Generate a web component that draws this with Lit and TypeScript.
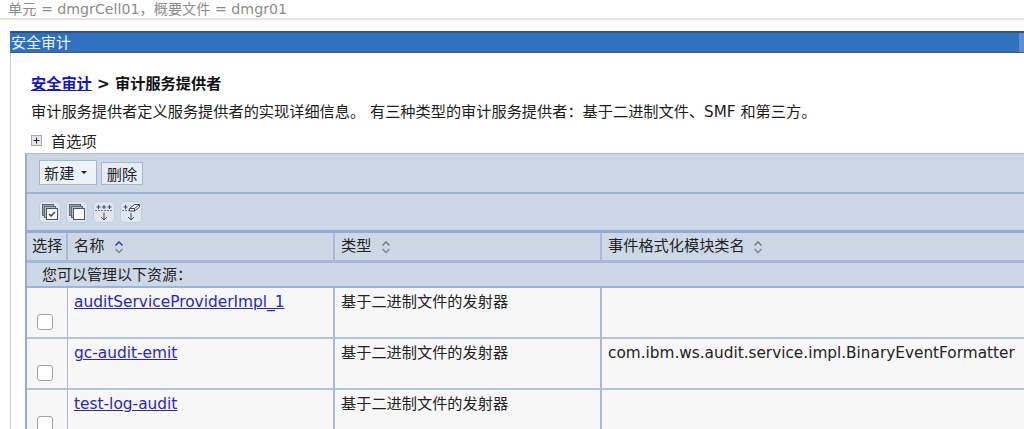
import { LitElement, html, css, svg } from "lit";
import { customElement } from "lit/decorators.js";

const sortIcon = (active: boolean) => svg`<svg class="sort" width="10" height="14" viewBox="0 0 10 14" fill="none" stroke-width="1.4">
  <path d="M1.5 5.5 L5 2 L8.5 5.5" stroke=${active ? "#1f3f9a" : "#6d7480"}/>
  <path d="M1.5 9 L5 12.5 L8.5 9" stroke="#7d8490"/></svg>`;

const rows = [
  { name: "auditServiceProviderImpl_1", type: "基于二进制文件的发射器", cls: "" },
  { name: "gc-audit-emit", type: "基于二进制文件的发射器", cls: "com.ibm.ws.audit.service.impl.BinaryEventFormatter" },
  { name: "test-log-audit", type: "基于二进制文件的发射器", cls: "" },
];

@customElement("app-root")
export class AppRoot extends LitElement {
  static styles = css`
    :host {
      display: block; width: 1024px; height: 429px; overflow: hidden; background: #fff;
      font-family: "DejaVu Sans", "Noto Sans CJK SC", sans-serif; font-size: 15.2px; color: #222;
    }
    .context {
      height: 18px; line-height: 18px; padding-left: 8px; color: #8c8c8c; font-size: 14.2px;
      border-bottom: 2px solid #e4e4e4; white-space: nowrap;
    }
    .panel { margin: 11px 0 0 10px; border-left: 1px solid #d2d2d2; height: 398px; }
    .title {
      height: 19px; line-height: 20px; background: #3071bf; color: #eef4fb; font-size: 15px;
      border-top: 2px solid #35507c; border-bottom: 1px solid #4a5a78; padding-left: 1px; margin-left: -1px;
      display: flex; justify-content: space-between;
    }
    .title i { display: block; width: 5px; background: #5f90cc; }
    .content { padding: 20px 0 0 14px; width: 1100px; }
    .crumb { padding-left: 6px; font-size: 15.2px; font-weight: 700; height: 22px; line-height: 22px; color: #111; }
    .crumb a { color: #1414c8; }
    .desc { padding-left: 6px; height: 24px; line-height: 24px; margin-top: 5px; white-space: nowrap; color: #1c1c1c; }
    .pref { display: flex; align-items: center; gap: 9px; height: 24px; margin-top: 4px; padding-left: 6px; }
    .plus { display: block; }
    .table { margin-top: 1px; border-left: 2px solid #98acd0; border-top: 1px solid #a9bad6; }
    .bar { background: #cdd8e7; display: flex; align-items: center; }
    .bar1 { height: 38px; gap: 4px; padding-left: 12px; border-bottom: 2px solid #9db3d8; }
    .bar2 { height: 36px; gap: 5px; padding-left: 12px; border-bottom: 3px solid #94aad2; }
    .btn {
      box-sizing: border-box; background: #e6edf6; border: 1px solid #a5b6cf; color: #222;
      height: 24px; display: flex; align-items: center; justify-content: center; padding: 0 3px; font-family: inherit;
    }
    .btn.new { height: 25px; width: 58px; gap: 7px; background: #edf2f9; margin-top: -2px; justify-content: flex-start; padding-left: 4px; }
    .btn.del { width: 42px; height: 23px; }
    .caret { width: 0; height: 0; border-left: 3px solid transparent; border-right: 3px solid transparent; border-top: 3px solid #222; }
    .tool {
      box-sizing: border-box; width: 22px; height: 22px; border-radius: 4px; background: #dfe6f0;
      border: 1px solid #c2cedf; display: flex; align-items: center; justify-content: center;
    }
    .grid { display: grid; grid-template-columns: 41px 267px 267px 1fr; }
    .head {
      background: #cdd8e7; height: 27px; line-height: 27px; padding-left: 6px; white-space: nowrap;
      border-right: 2px solid #a9bad6; border-bottom: 3px solid #a3b6d9; display: flex; align-items: center; gap: 8px;
    }
    .head:first-child { padding-left: 5px; }
    .head.wide { gap: 10px; }
    .group {
      grid-column: 1 / -1; background: #cdd8e7; height: 23px; line-height: 25px; padding-left: 15px; font-size: 15px;
      border-bottom: 2px solid #9db3d8;
    }
    .cell {
      box-sizing: border-box; height: 51px; background: #f7f7f8; border-right: 2px solid #a9bad6;
      border-bottom: 2px solid #b3c3df; padding: 3px 0 0 6px; line-height: 22px; white-space: nowrap;
    }
    .cell.check { padding: 26px 0 0 10px; border-right-width: 1px; }
    .cell.cls { font-size: 15.3px; }
    .cell a { color: #2828b8; font-size: 15.4px; }
    .box { display: block; box-sizing: border-box; width: 16px; height: 16px; background: #fff; border: 1px solid #a0a0a0; border-radius: 3px; }
  `;

  render() {
    return html`
      <div class="context">单元 = dmgrCell01，概要文件 = dmgr01</div>
      <div class="panel">
        <div class="title"><span>安全审计</span><i></i></div>
        <div class="content">
          <div class="crumb"><a href="#">安全审计</a> &gt; 审计服务提供者</div>
          <div class="desc">审计服务提供者定义服务提供者的实现详细信息。 有三种类型的审计服务提供者：基于二进制文件、SMF 和第三方。</div>
          <div class="pref">
            <svg class="plus" width="11" height="11" viewBox="0 0 11 11">
              <rect x="0.5" y="0.5" width="10" height="10" fill="#e4e7ea" stroke="#a8a8a8"/>
              <path d="M2.5 5.5h6M5.5 2.5v6" stroke="#222" fill="none"/>
            </svg>
            <span>首选项</span>
          </div>
          <div class="table">
            <div class="bar bar1">
              <div class="btn new">新建<span class="caret"></span></div>
              <div class="btn del">删除</div>
            </div>
            <div class="bar bar2">
              <div class="tool"><svg width="20" height="20" viewBox="0 0 20 20" fill="none">
                <rect x="2.500" y="2.500" width="11" height="11" fill="#9aa3ae" stroke="#5f6772"/>
                <rect x="4.500" y="4.500" width="11" height="11" fill="#b4bcc7" stroke="#5f6772"/>
                <rect x="6.500" y="6.500" width="11" height="11" fill="#f4f6f8" stroke="#4d5560"/>
                <path d="M9 12l2 2 4-4" stroke="#333c48" stroke-width="1.3"/>
              </svg></div>
              <div class="tool"><svg width="20" height="20" viewBox="0 0 20 20" fill="none">
                <rect x="2.500" y="2.500" width="11" height="11" fill="#9aa3ae" stroke="#5f6772"/>
                <rect x="4.500" y="4.500" width="11" height="11" fill="#b4bcc7" stroke="#5f6772"/>
                <rect x="6.500" y="6.500" width="11" height="11" fill="#fff" stroke="#4d5560"/>
              </svg></div>
              <div class="tool"><svg width="20" height="20" viewBox="0 0 20 20" fill="none" stroke="#3f4856">
                <path d="M1 8.500h18" stroke-dasharray="2 1" stroke="#6f7886"/>
                <path d="M4.500 3v4M2.500 5h4M10 3v4M8 5h4M15.500 3v4M13.500 5h4"/>
                <path d="M10 10.500v7.500M7 15l3 3 3-3"/>
              </svg></div>
              <div class="tool"><svg width="20" height="20" viewBox="0 0 20 20" fill="none" stroke="#3f4856">
                <path d="M1 8.500h7" stroke-dasharray="2 1" stroke="#6f7886"/>
                <path d="M4.500 3v4M2.500 5h4"/>
                <path d="M8.500 6.500l5-4h5v2.500l-5 4h-5z" fill="#f4f6f8"/>
                <path d="M8.500 6.500h5v2.500M13.500 6.500l5-4"/>
                <path d="M10 11v7M7 15l3 3 3-3"/>
              </svg></div>
            </div>
            <div class="grid">
              <div class="head">选择</div>
              <div class="head wide">名称 ${sortIcon(true)}</div>
              <div class="head wide">类型 ${sortIcon(false)}</div>
              <div class="head">事件格式化模块类名 ${sortIcon(false)}</div>
              <div class="group">您可以管理以下资源：</div>
              ${rows.map((r) => html`
                <div class="cell check"><span class="box"></span></div>
                <div class="cell"><a href="#">${r.name}</a></div>
                <div class="cell">${r.type}</div>
                <div class="cell cls">${r.cls}</div>
              `)}
            </div>
          </div>
        </div>
      </div>
    `;
  }
}
